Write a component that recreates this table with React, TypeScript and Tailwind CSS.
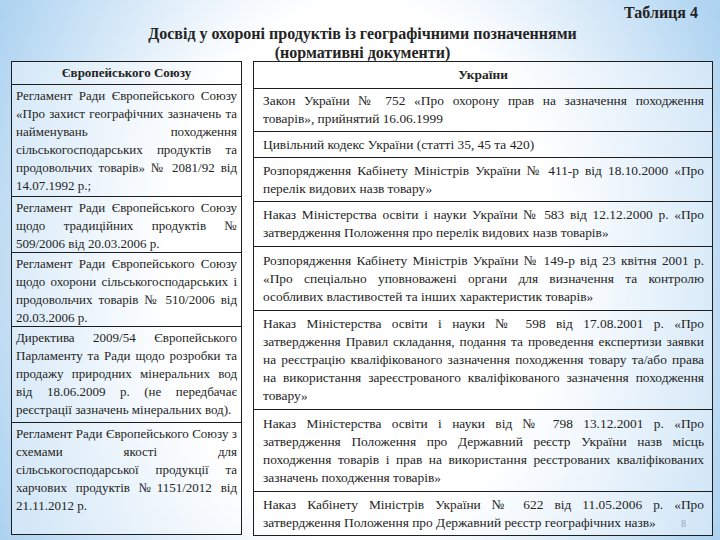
import React from "react";

type Row = { h: string; lines: string[] };

// Ліва колонка: документи Європейського Союзу
const euRows: Row[] = [
	{
		h: "h-[112px]",
		lines: [
			"Регламент Ради Європейського Союзу",
			"«Про захист географічних зазначень та",
			"найменувань походження",
			"сільськогосподарських продуктів та",
			"продовольчих товарів» № 2081/92 від",
			"14.07.1992 р.;",
		],
	},
	{
		h: "h-[56px]",
		lines: [
			"Регламент Ради Європейського Союзу",
			"щодо традиційних продуктів №",
			"509/2006 від 20.03.2006 р.",
		],
	},
	{
		h: "h-[74px]",
		lines: [
			"Регламент Ради Європейського Союзу",
			"щодо охорони сільськогосподарських і",
			"продовольчих товарів № 510/2006 від",
			"20.03.2006 р.",
		],
	},
	{
		h: "h-[96px]",
		lines: [
			"Директива 2009/54 Європейського",
			"Парламенту та Ради щодо розробки та",
			"продажу природних мінеральних вод",
			"від 18.06.2009 р. (не передбачає",
			"реєстрації зазначень мінеральних вод).",
		],
	},
	{
		h: "flex-1",
		lines: [
			"Регламент Ради Європейського Союзу з",
			"схемами якості для",
			"сільськогосподарської продукції та",
			"харчових продуктів №1151/2012 від",
			"21.11.2012 р.",
		],
	},
];

// Права колонка: документи України
const uaRows: Row[] = [
	{
		h: "h-[43px]",
		lines: [
			"Закон України № 752 «Про охорону прав на зазначення походження",
			"товарів», прийнятий 16.06.1999",
		],
	},
	{
		h: "h-[26px]",
		lines: ["Цивільний кодекс України (статті 35, 45 та 420)"],
	},
	{
		h: "h-[44px]",
		lines: [
			"Розпорядження Кабінету Міністрів України № 411-р від 18.10.2000 «Про",
			"перелік видових назв товару»",
		],
	},
	{
		h: "h-[45px]",
		lines: [
			"Наказ Міністерства освіти і науки України № 583 від 12.12.2000 р. «Про",
			"затвердження Положення про перелік видових назв товарів»",
		],
	},
	{
		h: "h-[64px]",
		lines: [
			"Розпорядження Кабінету Міністрів України № 149-р від 23 квітня 2001 р.",
			"«Про спеціально уповноважені органи для визначення та контролю",
			"особливих властивостей та інших характеристик товарів»",
		],
	},
	{
		h: "h-[99px]",
		lines: [
			"Наказ Міністерства освіти і науки № 598 від 17.08.2001 р. «Про",
			"затвердження Правил складання, подання та проведення експертизи заявки",
			"на реєстрацію кваліфікованого зазначення походження товару та/або права",
			"на використання зареєстрованого кваліфікованого зазначення походження",
			"товару»",
		],
	},
	{
		h: "h-[82px]",
		lines: [
			"Наказ Міністерства освіти і науки від № 798 13.12.2001 р. «Про",
			"затвердження Положення про Державний реєстр України назв місць",
			"походження товарів і прав на використання реєстрованих кваліфікованих",
			"зазначень походження товарів»",
		],
	},
	{
		h: "flex-1",
		lines: [
			"Наказ Кабінету Міністрів України № 622 від 11.05.2006 р. «Про",
			"затвердження Положення про Державний реєстр географічних назв»",
		],
	},
];

// Кожен рядок вирівняно по ширині, крім останнього
const Lines = ({ lines }: { lines: string[] }) => (
	<div className="w-full">
		{lines.map((line, i) =>
			i < lines.length - 1 ? (
				<div
					key={i}
					className="whitespace-nowrap text-justify [text-align-last:justify]"
				>
					{line}
				</div>
			) : (
				<div key={i} className="whitespace-nowrap text-left">
					{line}
				</div>
			)
		)}
	</div>
);

const App = () => {
	return (
		<div className="relative w-[720px] h-[540px] overflow-hidden text-[#242424] font-['Liberation_Serif','Times_New_Roman',serif] bg-[radial-gradient(ellipse_60%_110%_at_50%_50%,#ffffff_45%,#a3cdef_100%)]">
			{/* Заголовок */}
			<div className="h-[61px] flex flex-col">
				<div className="mt-[4px] leading-[18px] text-right pr-[22px] font-bold text-[16px]">
					Таблиця 4
				</div>
				<div className="mt-[2px] leading-[19px] text-center font-bold text-[16px] pl-[11px] pr-[6px]">
					<div>Досвід у охороні продуктів із географічними позначеннями</div>
					<div>(нормативні документи)</div>
				</div>
			</div>

			{/* Таблиці */}
			<div className="flex pl-[11px] gap-[11px] items-start">
				<div className="w-[231px] h-[474px] border border-[#1e1e1e] flex flex-col bg-white/40 text-[13px]">
					<div className="h-[23px] border-b border-[#1e1e1e] flex items-center justify-center font-bold">
						Європейського Союзу
					</div>
					{euRows.map((row, i) => (
						<div
							key={i}
							className={`${row.h} ${
								i < euRows.length - 1 ? "border-b border-[#1e1e1e]" : ""
							} px-[4px] pt-[2px] leading-[18px]`}
						>
							<Lines lines={row.lines} />
						</div>
					))}
				</div>

				<div className="relative w-[460px] h-[475px] border border-[#1e1e1e] flex flex-col bg-white/40 text-[13.4px]">
					<div className="h-[27px] border-b border-[#1e1e1e] flex items-center justify-center font-bold">
						України
					</div>
					{uaRows.map((row, i) => (
						<div
							key={i}
							className={`${row.h} ${
								i < uaRows.length - 1 ? "border-b border-[#1e1e1e]" : ""
							} pl-[9px] pr-[8px] leading-[18px] flex items-center`}
						>
							<Lines lines={row.lines} />
						</div>
					))}
					<span className="absolute right-[26px] bottom-[4px] text-[10px] text-[#8fa4ba]">
						8
					</span>
				</div>
			</div>
		</div>
	);
};

export default App;
